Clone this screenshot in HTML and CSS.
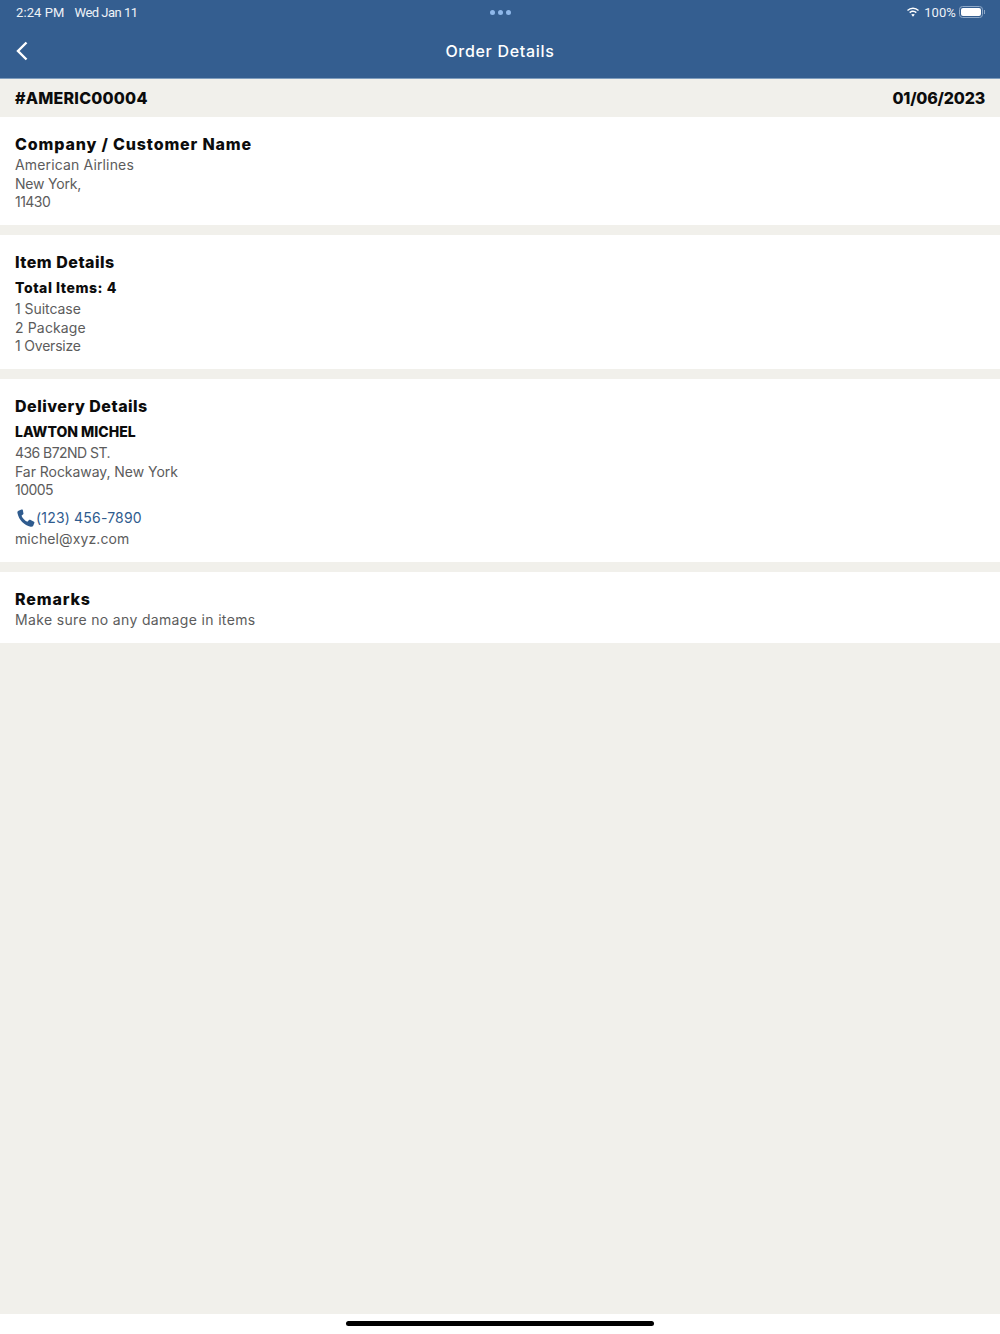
FILE: index.html
```html
<!DOCTYPE html>
<html lang="en">
<head>
<meta charset="utf-8">
<title>Order Details</title>
<link rel="stylesheet" href="styles.css">
</head>
<body>
<div class="screen">
  <header class="appbar">
    <div class="status">
      <div class="status-left"><span>2:24 PM</span><span class="status-date">Wed Jan 11</span></div>
      <div class="dots"><i></i><i></i><i></i></div>
      <div class="status-right">
        <svg class="wifi" width="14" height="11" viewBox="0 0 14 11"><path d="M7 1.900c1.900 0 3.700.8 5 2.100l1-1.100A8.500 8.500 0 0 0 7 .4 8.500 8.500 0 0 0 1 2.900L2 4c1.300-1.300 3.100-2.100 5-2.100zM7 5.100c1.100 0 2.100.4 2.800 1.100l1-1.100A5.500 5.500 0 0 0 7 3.600c-1.500 0-2.800.6-3.800 1.500l1 1.100C4.900 5.500 5.900 5.100 7 5.100zM7 6.900c-.7 0-1.300.3-1.800.7L7 9.700l1.800-2.100C8.300 7.200 7.700 6.900 7 6.900z" fill="#fff"/></svg>
        <span>100%</span>
        <div class="battery"><div class="battery-level"></div></div>
        <div class="battery-cap"></div>
      </div>
    </div>
    <div class="nav">
      <svg class="back" width="12" height="20" viewBox="0 0 12 20"><path d="M10.500 1.500 2 10l8.500 8.500" fill="none" stroke="#fff" stroke-width="2.400"/></svg>
      <h1>Order Details</h1>
    </div>
  </header>
  <div class="order-bar"><span>#AMERIC00004</span><span class="order-date">01/06/2023</span></div>
  <main class="content">
    <section class="card company">
      <h2>Company / Customer Name</h2>
      <p>American Airlines</p>
      <p class="narrow">New York,</p>
      <p class="digits">11430</p>
    </section>
    <section class="card items">
      <h2 class="short">Item Details</h2>
      <h3 class="spaced">Total Items: 4</h3>
      <p class="snug">1 Suitcase</p>
      <p>2 Package</p>
      <p class="narrow">1 Oversize</p>
    </section>
    <section class="card delivery">
      <h2 class="short">Delivery Details</h2>
      <h3>LAWTON MICHEL</h3>
      <p class="digits">436 B72ND ST.</p>
      <p class="snug">Far Rockaway, New York</p>
      <p class="digits">10005</p>
      <div class="phone">
        <svg width="20" height="20" viewBox="0 0 24 24"><path d="M6.600 1.800 3 3.200C1.700 3.800 1.500 5 1.800 6.400c1.500 7.700 8.100 14.600 15.800 16 1.400.3 2.700 0 3.200-1.300l1.300-3.300c.2-.6 0-1.100-.5-1.400l-4.600-2.300c-.5-.2-1-.1-1.400.3l-2 2.200c-3.100-1.500-5.500-4-7-7.200l2-1.800c.4-.4.500-.9.300-1.400L8.200 2.300c-.3-.5-1-.7-1.600-.5z" fill="#2f5b8e"/></svg>
        <span>(123) 456-7890</span>
      </div>
      <p class="email">michel@xyz.com</p>
    </section>
    <section class="card remarks">
      <h2>Remarks</h2>
      <p class="wide">Make sure no any damage in items</p>
    </section>
  </main>
  <footer class="home"><div class="home-bar"></div></footer>
</div>
</body>
</html>
```
FILE: styles.css
```css
* { box-sizing: border-box; margin: 0; padding: 0; }
html, body { height: 100%; }
body { font-family: Inter, "Liberation Sans", sans-serif; background: #f1f0eb; color: #5c5c5c; }
.screen { display: flex; flex-direction: column; height: 1334px; width: 1000px; overflow: hidden; }

.appbar { background: #345e90; height: 79px; color: #fff; flex: none; border-bottom: 1px solid #7f9dbd; }
.status { display: grid; grid-template-columns: 1fr auto 1fr; align-items: center; height: 24px; padding: 0 15px 0 16px; font-family: Roboto, sans-serif; font-size: 13px; letter-spacing: .1px; color: #eef2f7; }
.status-left { display: flex; gap: 10px; }
.status-date { letter-spacing: -.5px; }
.dots { display: flex; gap: 3px; }
.dots i { width: 5px; height: 5px; border-radius: 50%; background: #8fb8ea; }
.status-right { display: flex; align-items: center; justify-content: flex-end; }
.wifi { margin-right: 4px; }
.battery { width: 24px; height: 12px; margin-left: 3px; border: 1px solid #8fa9c8; border-radius: 3.500px; padding: 1px; }
.battery-level { height: 100%; background: #fff; border-radius: 2px; }
.battery-cap { width: 1px; height: 4px; background: #8fa9c8; margin-left: 1px; }

.nav { display: flex; align-items: center; justify-content: center; height: 54px; position: relative; }
.back { position: absolute; left: 16px; top: 17px; }
.nav h1 { font-size: 16px; font-weight: 500; letter-spacing: .7px; }

.order-bar { display: flex; justify-content: space-between; align-items: center; height: 38px; padding: 0 15px; font-size: 16px; font-weight: 800; color: #0c0c0c; flex: none; letter-spacing: .22px; }
.order-date { letter-spacing: -.2px; }

.content { flex: 1; display: flex; flex-direction: column; gap: 10px; }
.card { background: #fff; padding: 15px 15px 0; }
.card h2 { font-size: 16px; font-weight: 800; color: #0c0c0c; line-height: 24px; letter-spacing: .85px; }
.card h2.short { letter-spacing: .5px; }
.card h3 { font-size: 14px; font-weight: 800; color: #0c0c0c; line-height: 24px; margin-top: 2px; letter-spacing: 0; }
.card h3.spaced { letter-spacing: .55px; }
.card p { font-size: 14px; line-height: 18.600px; color: #5c5c5c; letter-spacing: .15px; }
.card p.digits { letter-spacing: -.55px; }
.card p.narrow { letter-spacing: -.2px; }
.card p.snug { letter-spacing: -.05px; }
.card p.wide { letter-spacing: .34px; }
.card p.email { letter-spacing: .1px; }
.company { height: 108px; }
.items { height: 134px; }
.delivery { height: 183px; }
.remarks { height: 71px; }
.phone { display: flex; align-items: center; height: 24px; margin-top: 6px; color: #2f5b8e; font-size: 14px; letter-spacing: .18px; }
.phone svg { margin-left: 1px; }

.home { height: 20px; background: #fff; flex: none; display: flex; justify-content: center; padding-top: 7px; }
.home-bar { width: 308px; height: 5px; border-radius: 3px; background: #000; }
```
